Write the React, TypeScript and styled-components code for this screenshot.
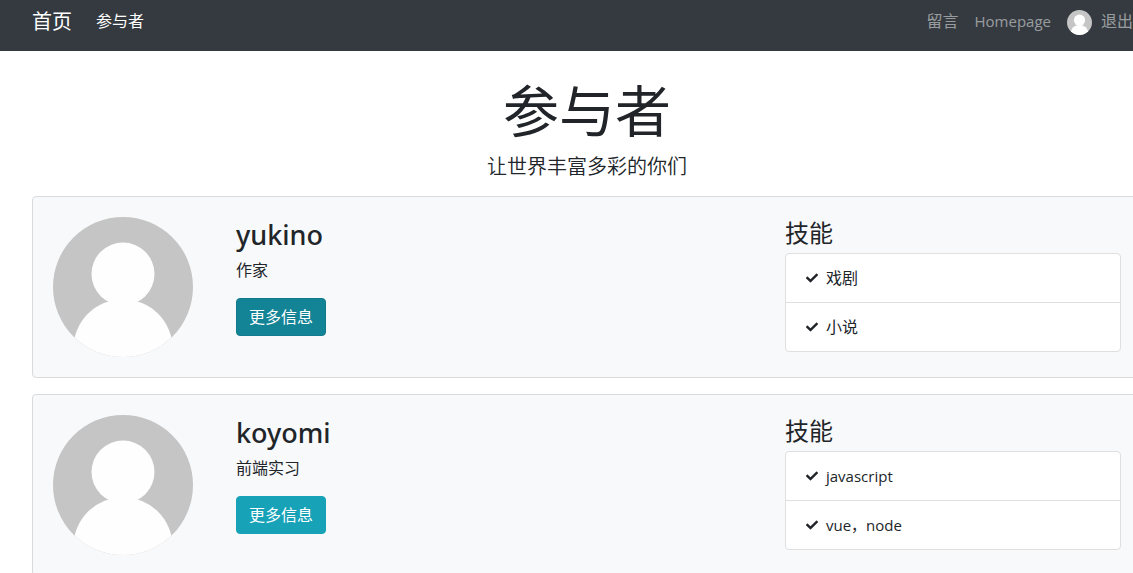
import React from "react";
import styled, { createGlobalStyle } from "styled-components";
import { FaCheck } from "react-icons/fa";

const GlobalStyle = createGlobalStyle`
  *, *::before, *::after { box-sizing: border-box; }
  html { overflow-x: hidden; }
  body {
    margin: 0;
    overflow-x: hidden;
    background: #fff;
    color: #212529;
    font: 400 16px/24px "Open Sans", "Noto Sans CJK SC", sans-serif;
  }
  h1, h2, h3, p, ul { margin: 0; padding: 0; font-weight: inherit; }
`;

const Navbar = styled.nav`
  display: flex;
  align-items: center;
  justify-content: space-between;
  padding: 7px 0 14px 32px;
  background: #343a40;
`;

const NavGroup = styled.div<{ $gap: number }>`
  display: flex;
  align-items: center;
  gap: ${(p) => p.$gap}px;
`;

const Brand = styled.a`
  color: #fff;
  font-size: 20px;
  line-height: 30px;
  text-decoration: none;
`;

const NavLink = styled.a<{ $active?: boolean }>`
  display: flex;
  align-items: center;
  gap: 9px;
  padding-bottom: 2px;
  color: ${(p) => (p.$active ? "#fff" : "rgba(255, 255, 255, 0.5)")};
  text-decoration: none;
  white-space: nowrap;

  svg {
    margin-top: 2px;
  }
`;

const Latin = styled.span`
  font-size: 15px;
`;

const AvatarSvg = styled.svg<{ $size: number }>`
  display: block;
  flex: none;
  width: ${(p) => p.$size}px;
  height: ${(p) => p.$size}px;
  border-radius: 50%;
`;

const Main = styled.main`
  margin: 0 -9px 0 32px;
  padding-top: 23px;
`;

const Header = styled.header`
  margin-bottom: 15px;
  text-align: center;
`;

const Title = styled.h1`
  font-family: "Noto Sans CJK SC", sans-serif;
  font-size: 56px;
  font-weight: 400;
  line-height: 67px;
`;

const Lead = styled.p`
  margin-top: 10px;
  font-family: "Noto Sans CJK SC", sans-serif;
  font-size: 20px;
  font-weight: 350;
  line-height: 30px;
`;

const Card = styled.article`
  display: grid;
  grid-template-columns: 2fr 6fr 4fr;
  margin-bottom: 16px;
  padding: 20px 5px;
  border: 1px solid #d8dadc;
  border-radius: 4px;
  background: #f8f9fa;
`;

const Column = styled.div`
  min-width: 0;
  padding: 0 15px;
`;

const Name = styled.h2`
  margin-bottom: 6px;
  font-family: "Noto Sans", sans-serif;
  font-size: 27px;
  font-weight: 500;
  line-height: 35px;
`;

const Role = styled.p`
  margin-bottom: 16px;
`;

const MoreButton = styled.button<{ $pressed?: boolean }>`
  display: block;
  padding: 6px 12px;
  border: 1px solid ${(p) => (p.$pressed ? "#117a8b" : "#17a2b8")};
  border-radius: 4px;
  background: ${(p) => (p.$pressed ? "#138496" : "#17a2b8")};
  color: #fff;
  font: inherit;
  line-height: 24px;
  cursor: pointer;
`;

const SkillTitle = styled.h3`
  margin-bottom: 4px;
  font-size: 24px;
  line-height: 32px;
`;

const SkillList = styled.ul`
  list-style: none;
  border: 1px solid #dfdfdf;
  border-radius: 4px;
  background: #fff;
`;

const Skill = styled.li`
  display: flex;
  align-items: center;
  gap: 8px;
  padding: 12px 20px;

  & + & {
    border-top: 1px solid #dfdfdf;
  }
`;

function Avatar({ size }: { size: number }) {
  return (
    <AvatarSvg $size={size} viewBox="0 0 140 140" aria-hidden="true">
      <rect width="140" height="140" fill="#c5c5c5" />
      <circle cx="70" cy="57" r="31.5" fill="#fefefe" />
      <circle cx="70" cy="132" r="49.7" fill="#fefefe" />
    </AvatarSvg>
  );
}

function SkillName({ children }: { children: string }) {
  return /[a-z]/i.test(children) ? <Latin>{children}</Latin> : <span>{children}</span>;
}

const people = [
  { name: "yukino", role: "作家", skills: ["戏剧", "小说"], pressed: true },
  { name: "koyomi", role: "前端实习", skills: ["javascript", "vue，node"], pressed: false },
];

export default function App() {
  return (
    <>
      <GlobalStyle />
      <Navbar lang="zh-CN">
        <NavGroup $gap={24}>
          <Brand href="#">首页</Brand>
          <NavLink href="#" $active>参与者</NavLink>
        </NavGroup>
        <NavGroup $gap={16}>
          <NavLink href="#">留言</NavLink>
          <NavLink href="#">
            <Latin>Homepage</Latin>
          </NavLink>
          <NavLink href="#">
            <Avatar size={25} />
            退出
          </NavLink>
        </NavGroup>
      </Navbar>
      <Main lang="zh-CN">
        <Header>
          <Title>参与者</Title>
          <Lead>让世界丰富多彩的你们</Lead>
        </Header>
        {people.map((person) => (
          <Card key={person.name}>
            <Column>
              <Avatar size={140} />
            </Column>
            <Column>
              <Name>{person.name}</Name>
              <Role>{person.role}</Role>
              <MoreButton type="button" $pressed={person.pressed}>更多信息</MoreButton>
            </Column>
            <Column>
              <SkillTitle>技能</SkillTitle>
              <SkillList>
                {person.skills.map((skill) => (
                  <Skill key={skill}>
                    <FaCheck size={12} aria-hidden="true" />
                    <SkillName>{skill}</SkillName>
                  </Skill>
                ))}
              </SkillList>
            </Column>
          </Card>
        ))}
      </Main>
    </>
  );
}
